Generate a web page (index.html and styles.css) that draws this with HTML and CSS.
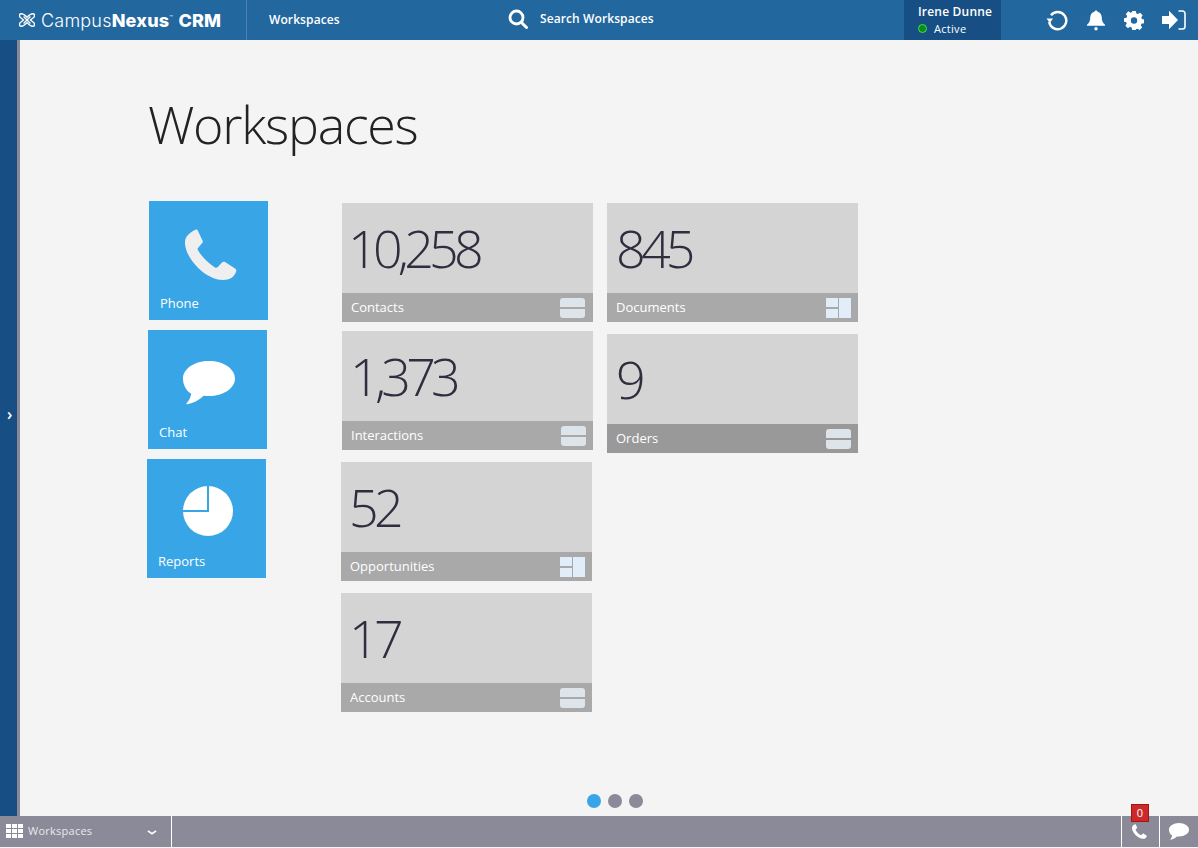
FILE: index.html
```html
<!DOCTYPE html>
<html lang="en">
<head>
<meta charset="utf-8">
<title>Workspaces</title>
<link rel="stylesheet" href="styles.css">
</head>
<body>
<div class="app">
  <header class="topbar">
    <div class="brand">
      <svg class="brand-mark" viewBox="1 2 14 12" width="16" height="14" fill="none" stroke="#fff" stroke-width="1.200"><path d="M3 2.500C1 2.500 1 5 2.500 6L5 8 2.500 10C1 11 1 13.500 3 13.500 4.500 13.500 6 12.500 8 10.500 10 12.500 11.500 13.500 13 13.500 15 13.500 15 11 13.500 10L11 8 13.500 6C15 5 15 2.500 13 2.500 11.500 2.500 10 3.500 8 5.500 6 3.500 4.500 2.500 3 2.500Z"/><path d="M5 5 11 11M11 5 5 11"/></svg>
      <span class="brand-name"><span class="brand-light">Campus</span><b>Nexus</b><sup class="tm">™</sup> <b>CRM</b></span>
    </div>
    <nav class="crumb">Workspaces</nav>
    <div class="search">
      <svg viewBox="0 0 20 20" width="20" height="20" fill="none" stroke="#fff"><circle cx="8.5" cy="8.5" r="6.5" stroke-width="2.8"/><path d="M13.5 13.5 18.5 18.5" stroke-width="3" stroke-linecap="round"/></svg>
      <span>Search Workspaces</span>
    </div>
    <div class="user">
      <div class="user-name">Irene Dunne</div>
      <div class="user-status"><i class="status-dot"></i>Active</div>
    </div>
    <div class="actions">
      <svg viewBox="0 0 22 22" width="22" height="22" fill="none" stroke="#fff" stroke-width="2.400"><path d="M5 6.200A8.600 8.600 0 1 1 3.200 13"/><path d="M0.500 10.500H7L3.800 15Z" fill="#fff" stroke="none" transform="translate(0 -1)"/></svg>
      <svg viewBox="0 0 20 22" width="20" height="22" fill="#fff"><path d="M10 1.500c.9 0 1.500.6 1.500 1.300 3 .7 4.200 3.200 4.300 6.200.1 3 .9 5 3.200 6.700v1H1v-1c2.300-1.700 3.100-3.700 3.200-6.700.1-3 1.300-5.500 4.300-6.200 0-.7.600-1.300 1.500-1.300Z"/><circle cx="10" cy="19.800" r="1.700"/></svg>
      <svg viewBox="0 0 22 22" width="20" height="20" fill="#fff" fill-rule="evenodd"><path d="M9 1h4l.6 2.800 1.700.7 2.400-1.500 2.800 2.800-1.500 2.400.7 1.700 2.300.6v4l-2.800.6-.7 1.700 1.500 2.400-2.800 2.800-2.400-1.500-1.700.7L13 22H9l-.6-2.800-1.700-.7-2.400 1.500-2.800-2.800 1.500-2.400-.7-1.700L0 13V9l2.800-.6.7-1.700L2 4.300 4.800 1.500l2.400 1.500 1.700-.7ZM11 8a3.500 3.500 0 1 0 0 7 3.500 3.500 0 0 0 0-7Z"/></svg>
      <svg viewBox="0 0 24 20" width="24" height="20" fill="#fff"><path d="M0 6h7V.8L16 10 7 19.200V14H0Z"/><path d="M16.500 1h4A2.500 2.500 0 0 1 23 3.500v13a2.500 2.500 0 0 1-2.500 2.500h-4" fill="none" stroke="#fff" stroke-width="1.600"/></svg>
    </div>
  </header>

  <div class="middle">
    <aside class="rail"><span class="rail-arrow">›</span></aside>
    <main class="content">
      <h1 class="title">Workspaces</h1>
      <div class="board">
        <section class="launchers">
          <a class="launcher launcher-phone">
            <svg class="launcher-icon" viewBox="0 0 52 52" width="52" height="52" fill="#efefef"><path d="M9 1.500C10.500.5 11.500 0 12.500 1L17.500 11.500C18 12.500 18 13.300 17 14.200L13 19C12.500 19.800 12.500 20.500 13 21.300 17 28 23 34 30 38.500 31 39 32 38.800 32.800 38L37 33.500C38 32.500 39 32.500 40 33L50 39.500C51.500 40.500 51.500 41.500 51 43 49 48 45 51 38 51 20 51-1 28 0 12.500 .3 8 4 4 9 1.500Z"/></svg>
            <span class="launcher-label">Phone</span>
          </a>
          <a class="launcher launcher-chat">
            <svg class="launcher-icon" viewBox="0 0 52 44" width="52" height="44" fill="#fff"><path d="M26 0c14.400 0 26 7.800 26 17.500S40.400 35 26 35c-1.800 0-3.600-.1-5.300-.3C16 39 10.500 42 4.500 43.300c-1 .2-1.500-.5-.8-1.300 2-2.300 3.800-5 4.500-9.300C3 29.500 0 24 0 17.500 0 7.800 11.600 0 26 0Z"/></svg>
            <span class="launcher-label">Chat</span>
          </a>
          <a class="launcher launcher-reports">
            <svg class="launcher-icon" viewBox="0 0 50 50" width="50" height="50"><circle cx="25" cy="25" r="25" fill="#fff"/><path d="M25 0V25H0" fill="none" stroke="#38a6e6" stroke-width="2"/></svg>
            <span class="launcher-label">Reports</span>
          </a>
        </section>
        <section class="stat-col stat-col-a">
          <article class="stat stat-contacts">
            <div class="stat-num">10,258</div>
            <div class="stat-foot"><span>Contacts</span><span class="ico-rows"><i></i><i></i></span></div>
          </article>
          <article class="stat stat-interactions">
            <div class="stat-num">1,373</div>
            <div class="stat-foot"><span>Interactions</span><span class="ico-rows"><i></i><i></i></span></div>
          </article>
          <article class="stat stat-opps">
            <div class="stat-num">52</div>
            <div class="stat-foot"><span>Opportunities</span><span class="ico-split"><i></i><i></i><i></i></span></div>
          </article>
          <article class="stat stat-accounts">
            <div class="stat-num">17</div>
            <div class="stat-foot"><span>Accounts</span><span class="ico-rows"><i></i><i></i></span></div>
          </article>
        </section>
        <section class="stat-col stat-col-b">
          <article class="stat">
            <div class="stat-num">845</div>
            <div class="stat-foot"><span>Documents</span><span class="ico-split"><i></i><i></i><i></i></span></div>
          </article>
          <article class="stat stat-orders">
            <div class="stat-num">9</div>
            <div class="stat-foot stat-foot-dark"><span>Orders</span><span class="ico-rows"><i></i><i></i></span></div>
          </article>
        </section>
      </div>
      <div class="pager"><i class="dot dot-on"></i><i class="dot"></i><i class="dot"></i></div>
    </main>
  </div>

  <footer class="taskbar">
    <div class="task">
      <span class="grid-ico"><i></i><i></i><i></i><i></i><i></i><i></i><i></i><i></i><i></i></span>
      <span class="task-label">Workspaces</span>
      <svg class="task-caret" viewBox="0 0 12 6" width="10" height="5" fill="none" stroke="#fff" stroke-width="2"><path d="M1 1 6 4.500 11 1"/></svg>
    </div>
    <div class="tray">
      <div class="tray-btn tray-phone">
        <span class="badge">0</span>
        <svg viewBox="0 0 52 52" width="15" height="15" fill="#fff"><path d="M9 1.500C10.500.5 11.500 0 12.500 1L17.500 11.500C18 12.500 18 13.300 17 14.200L13 19C12.500 19.800 12.500 20.500 13 21.300 17 28 23 34 30 38.500 31 39 32 38.800 32.800 38L37 33.500C38 32.500 39 32.500 40 33L50 39.500C51.500 40.500 51.500 41.500 51 43 49 48 45 51 38 51 20 51-1 28 0 12.500 .3 8 4 4 9 1.500Z"/></svg>
      </div>
      <div class="tray-btn tray-chat">
        <svg viewBox="0 0 52 44" width="20" height="17" fill="#fff"><path d="M26 0c14.400 0 26 7.800 26 17.500S40.400 35 26 35c-1.800 0-3.600-.1-5.300-.3C16 39 10.500 42 4.500 43.300c-1 .2-1.500-.5-.8-1.300 2-2.300 3.800-5 4.500-9.300C3 29.500 0 24 0 17.500 0 7.800 11.600 0 26 0Z"/></svg>
      </div>
    </div>
  </footer>
</div>
</body>
</html>
```
FILE: styles.css
```css
* { box-sizing: border-box; }
html, body { margin: 0; height: 100%; }
body { font-family: "Open Sans", "Liberation Sans", sans-serif; background: #f4f4f4; overflow: hidden; }
.app { height: 848px; display: flex; flex-direction: column; }

.topbar { height: 40px; background: #23679f; color: #fff; display: flex; align-items: stretch; flex: none; }
.brand { width: 247px; display: flex; align-items: center; padding-left: 19px; gap: 6px; border-right: 1px solid #4b83b1; }
.brand-mark { flex: none; }
.brand-name { font-family: "Inter", sans-serif; font-size: 18px; letter-spacing: .2px; white-space: nowrap; }
.brand-light { font-weight: 300; }
.brand-name b { font-weight: 800; }
.tm { font-size: 6px; vertical-align: 7px; line-height: 0; font-weight: 300; }
.crumb { width: 236px; padding-left: 22px; font-size: 12px; font-weight: 600; line-height: 40px; letter-spacing: .1px; }
.search { margin-left: 25px; width: 396px; display: flex; align-items: center; gap: 12px; font-size: 12px; font-weight: 600; padding-bottom: 3px; letter-spacing: .1px; }
.user { width: 97px; background: #174f84; padding: 3px 0 0 14px; }
.user-name { font-size: 12px; font-weight: 600; line-height: 17px; letter-spacing: .2px; }
.user-status { font-size: 11px; line-height: 17px; letter-spacing: .3px; display: flex; align-items: center; }
.status-dot { width: 9px; height: 9px; border-radius: 50%; background: #0d8a1d; border: 1px solid #3fe04f; margin-right: 7px; }
.actions { flex: 1; display: flex; align-items: center; gap: 18px; padding-left: 45px; }

.middle { flex: 1; display: flex; min-height: 0; }
.rail { width: 20px; background: #174f84; border-right: 3px solid #8a8a97; display: flex; align-items: center; color: #fff; flex: none; padding-left: 7px; padding-bottom: 28px; }
.rail-arrow { font-size: 16px; line-height: 14px; font-weight: 600; }
.content { flex: 1; position: relative; padding-left: 128px; }
.title { margin: 0; padding-top: 47px; height: 161px; font-size: 52px; line-height: 74px; font-weight: 300; color: #222; letter-spacing: -1.3px; }

.board { display: flex; align-items: flex-start; margin-left: -1px; }
.launchers { width: 194px; display: flex; flex-direction: column; }
.launcher { width: 119px; height: 119px; background: #38a6e6; color: #fff; display: block; position: relative; margin-bottom: 10px; }
.launcher-phone { margin-left: 2px; }
.launcher-chat { margin-left: 1px; }
.launcher-icon { position: absolute; display: block; }
.launcher-phone .launcher-icon { left: 36px; top: 28px; }
.launcher-chat .launcher-icon { left: 35px; top: 31px; }
.launcher-reports .launcher-icon { left: 36px; top: 27px; }
.launcher-label { position: absolute; left: 11px; bottom: 8px; font-size: 13px; line-height: 18px; }

.stat-col { width: 251px; padding-top: 2px; display: flex; flex-direction: column; }
.stat-col-a { margin-left: 1px; }
.stat-col-b { margin-left: 14px; }
.stat { width: 251px; height: 119px; background: #d4d4d4; display: flex; flex-direction: column; }
.stat-interactions { margin-top: 9px; }
.stat-opps { margin-top: 12px; margin-left: -1px; }
.stat-accounts { margin-top: 12px; margin-left: -1px; }
.stat-orders { margin-top: 12px; }
.stat-num { height: 90px; padding-left: 8px; font-size: 52px; line-height: 90px; font-weight: 300; color: #2e2e3e; letter-spacing: -4.8px; }
.stat-col-b .stat-num { padding-left: 9px; }
.stat-contacts .stat-num { padding-left: 6px; }
.stat-foot { height: 29px; background: #a9a9a9; color: #fff; font-size: 13px; display: flex; align-items: center; justify-content: space-between; padding: 0 7px 0 9px; }
.stat-foot > span:first-child { margin-top: -2px; }
.stat-contacts .stat-foot { padding-right: 8px; }
.stat-foot-dark { background: #999; }

.ico-rows { width: 25px; height: 20px; display: flex; flex-direction: column; justify-content: space-between; }
.ico-rows i { height: 9px; background: #dde4ea; }
.ico-rows i:first-child { border-radius: 3px 3px 0 0; }
.ico-rows i:last-child { border-radius: 0 0 3px 3px; }
.ico-split { width: 25px; height: 20px; display: grid; grid-template-columns: 12px 12px; grid-template-rows: 9px 9px; gap: 2px 1px; }
.ico-split i { background: #e1eef9; }
.ico-split i:nth-child(2) { grid-column: 2; grid-row: 1 / span 2; }
.ico-split i:nth-child(3) { grid-column: 1; grid-row: 2; }

.pager { position: absolute; left: 567px; top: 754px; display: flex; gap: 7px; }
.dot { width: 14px; height: 14px; border-radius: 50%; background: #8a8a99; display: block; }
.dot-on { background: #38a6e6; }

.taskbar { height: 31px; margin-bottom: 1px; background: #8a8a99; color: #fff; display: flex; justify-content: space-between; flex: none; }
.task { width: 172px; border-right: 1px solid #fff; display: flex; align-items: center; padding-left: 6px; position: relative; }
.grid-ico { width: 17px; height: 14px; display: grid; grid-template-columns: repeat(3, 5px); grid-auto-rows: 4px; gap: 1px; margin-bottom: 2px; }
.grid-ico i { background: #fff; }
.task-label { margin: -2px 0 0 5px; font-size: 11px; letter-spacing: .25px; color: #e8e8ee; }
.task-caret { position: absolute; left: 147px; top: 14px; }
.tray { display: flex; }
.tray-btn { width: 38px; border-left: 1px solid #fff; display: flex; align-items: center; justify-content: center; position: relative; }
.tray-phone { padding-right: 2px; }
.tray-chat { width: 39px; }
.badge { position: absolute; left: 9px; top: -12px; width: 18px; height: 18px; background: #cc2a2a; border: 1px solid #a81212; color: #fff; font-size: 11px; line-height: 16px; text-align: center; }
```
